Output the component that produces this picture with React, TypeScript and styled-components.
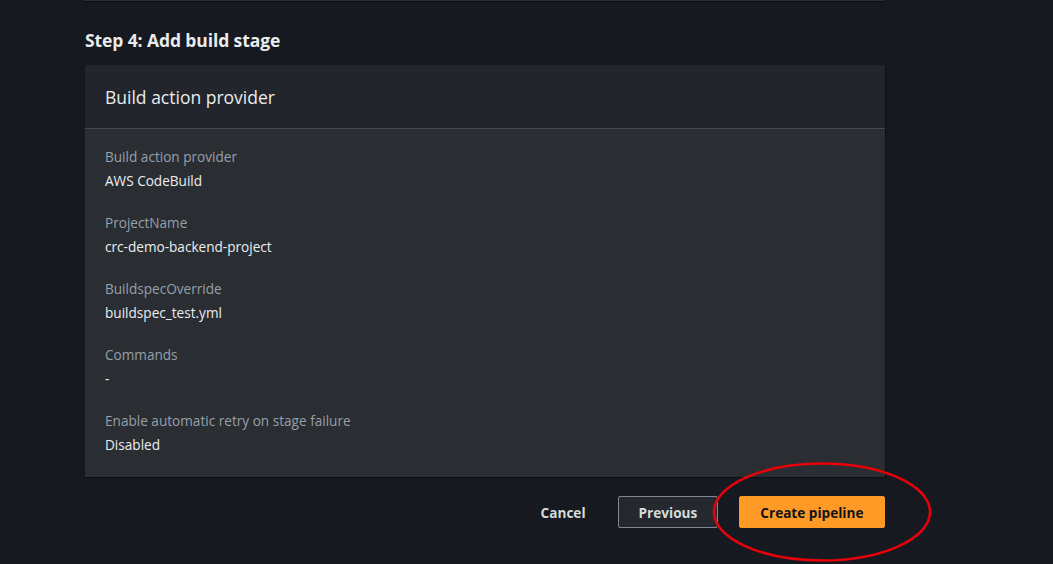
import React from "react";
import styled, { createGlobalStyle } from "styled-components";

const GlobalStyle = createGlobalStyle`
  html, body {
    margin: 0;
    padding: 0;
    background: #16191f;
  }
  body {
    font-family: "Open Sans", "Noto Sans", Arial, sans-serif;
    -webkit-font-smoothing: antialiased;
  }
`;

const Page = styled.div`
  position: relative;
  width: 1053px;
  height: 564px;
  overflow: hidden;
  background: #16191f;
`;

const Column = styled.div`
  width: 800px;
  margin-left: 85px;
`;

const PrevPanelEdge = styled.div`
  height: 1px;
  background: #2a2d33;
  border-bottom: 1px solid #0c0e12;
`;

const StepTitle = styled.h2`
  margin: 27px 0 14px;
  font-size: 17.5px;
  line-height: 22px;
  font-weight: 700;
  color: #e9ebed;
  letter-spacing: -0.1px;
`;

const Panel = styled.section`
  background: #2a2d32;
  box-shadow: 1px 1px 0 #0e1014;
`;

const PanelHeader = styled.div`
  height: 63px;
  display: flex;
  align-items: center;
  padding: 0 20px;
  background: #22262c;
  border-bottom: 1px solid #434951;
`;

const PanelTitle = styled.h3`
  margin: 0;
  font-size: 17.5px;
  font-weight: 400;
  color: #e9ebed;
`;

const PanelBody = styled.dl`
  margin: 0;
  padding: 17px 20px 21px;
  display: flex;
  flex-direction: column;
  gap: 20px;
`;

const Field = styled.div`
  display: flex;
  flex-direction: column;
  gap: 2px;
`;

const Label = styled.dt`
  font-size: 13.6px;
  line-height: 22px;
  color: #95a0ab;
`;

const Value = styled.dd`
  margin: 0;
  font-size: 13.6px;
  line-height: 22px;
  color: #eceef0;
`;

const Actions = styled.div`
  display: flex;
  justify-content: flex-end;
  align-items: center;
  margin-top: 19px;
`;

const Button = styled.button<{ $variant: "link" | "normal" | "primary" }>`
  height: 32px;
  box-sizing: border-box;
  padding: 0 ${(p) => (p.$variant === "primary" ? "20.5px" : "19.5px")};
  font-family: inherit;
  font-size: 13.6px;
  font-weight: 700;
  border-radius: 2px;
  cursor: pointer;
  border: 1px solid
    ${(p) => (p.$variant === "normal" ? "#7d8894" : p.$variant === "primary" ? "#ff9a26" : "transparent")};
  background: ${(p) => (p.$variant === "primary" ? "#ff9a26" : p.$variant === "normal" ? "#25292f" : "transparent")};
  color: ${(p) => (p.$variant === "primary" ? "#0f141a" : "#d5dbdb")};
  margin-left: ${(p) => (p.$variant === "primary" ? "21px" : p.$variant === "normal" ? "12px" : "0")};
`;

const Annotation = styled.svg`
  position: absolute;
  left: 710px;
  top: 460px;
  pointer-events: none;
`;

const fields = [
  { label: "Build action provider", value: "AWS CodeBuild" },
  { label: "ProjectName", value: "crc-demo-backend-project" },
  { label: "BuildspecOverride", value: "buildspec_test.yml" },
  { label: "Commands", value: "-" },
  { label: "Enable automatic retry on stage failure", value: "Disabled" },
];

export default function App() {
  return (
    <Page>
      <GlobalStyle />
      <Column>
        <PrevPanelEdge />
        <StepTitle>Step 4: Add build stage</StepTitle>
        <Panel>
          <PanelHeader>
            <PanelTitle>Build action provider</PanelTitle>
          </PanelHeader>
          <PanelBody>
            {fields.map((f) => (
              <Field key={f.label}>
                <Label>{f.label}</Label>
                <Value>{f.value}</Value>
              </Field>
            ))}
          </PanelBody>
        </Panel>
        <Actions>
          <Button $variant="link">Cancel</Button>
          <Button $variant="normal">Previous</Button>
          <Button $variant="primary">Create pipeline</Button>
        </Actions>
      </Column>
      <Annotation width="224" height="104" viewBox="0 0 224 104">
        <ellipse cx="112" cy="52" rx="108" ry="48.5" fill="none" stroke="#e8000b" strokeWidth="2.5" />
      </Annotation>
    </Page>
  );
}
